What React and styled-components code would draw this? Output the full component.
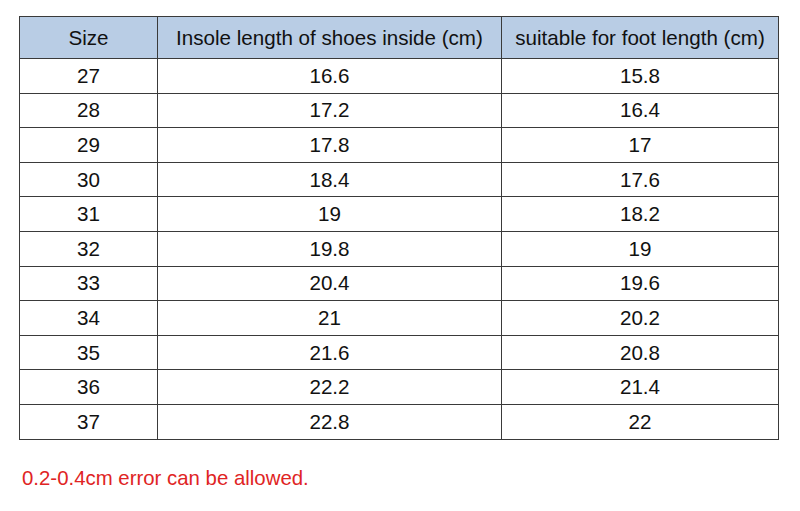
import React from "react";
import styled, { createGlobalStyle } from "styled-components";

const GlobalStyle = createGlobalStyle`
  html, body {
    margin: 0;
    padding: 0;
    background: #ffffff;
    font-family: "Liberation Sans", Arial, sans-serif;
  }
`;

const rows = [
  ["27", "16.6", "15.8"],
  ["28", "17.2", "16.4"],
  ["29", "17.8", "17"],
  ["30", "18.4", "17.6"],
  ["31", "19", "18.2"],
  ["32", "19.8", "19"],
  ["33", "20.4", "19.6"],
  ["34", "21", "20.2"],
  ["35", "21.6", "20.8"],
  ["36", "22.2", "21.4"],
  ["37", "22.8", "22"],
];

const App = () => {
  return (
    <Page>
      <GlobalStyle />
      <SizeTable>
        <colgroup>
          <col style={{ width: 138 }} />
          <col style={{ width: 344 }} />
          <col style={{ width: 277 }} />
        </colgroup>
        <thead>
          <tr>
            <HeadCell>Size</HeadCell>
            <HeadCell>Insole length of shoes inside (cm)</HeadCell>
            <HeadCell>suitable for foot length (cm)</HeadCell>
          </tr>
        </thead>
        <tbody>
          {rows.map((r) => (
            <tr key={r[0]}>
              <Cell>{r[0]}</Cell>
              <Cell>{r[1]}</Cell>
              <Cell>{r[2]}</Cell>
            </tr>
          ))}
        </tbody>
      </SizeTable>
      <Note>0.2-0.4cm error can be allowed.</Note>
    </Page>
  );
};

export default App;

const Page = styled.div`
  padding: 16px 0 0 19px;
  width: 800px;
  height: 511px;
  box-sizing: border-box;
`;

const SizeTable = styled.table`
  border-collapse: collapse;
  table-layout: fixed;
  width: 759px;
  color: #111;
  font-size: 20.6px;
`;

const HeadCell = styled.th`
  background: #b9cde5;
  border: 1px solid #3a3a3a;
  height: 41px;
  padding: 0;
  font-weight: normal;
  text-align: center;
`;

const Cell = styled.td`
  border: 1px solid #3a3a3a;
  height: 33.6px;
  padding: 0;
  text-align: center;
`;

const Note = styled.p`
  margin: 27px 0 0 3px;
  color: #e02424;
  font-size: 20.4px;
`;
